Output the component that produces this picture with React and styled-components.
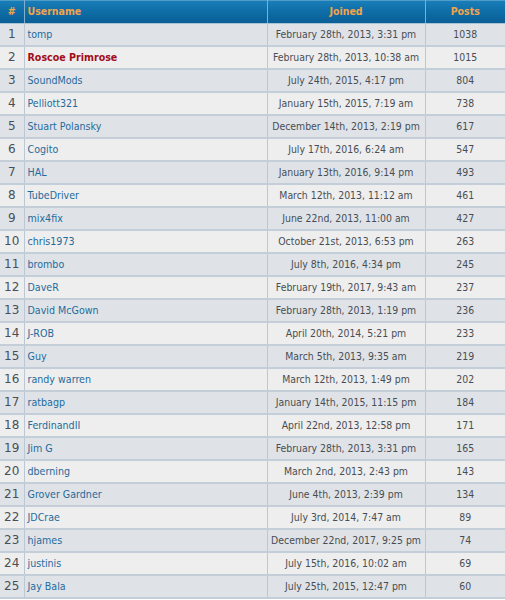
import React from "react";
import styled, { createGlobalStyle } from "styled-components";

const Global = createGlobalStyle`
  html, body { margin: 0; padding: 0; background: #ffffff; }
  body { font-family: "DejaVu Sans Condensed", "DejaVu Sans", Verdana, sans-serif; }
`;

const Table = styled.table`
  width: 505px;
  border-collapse: collapse;
  table-layout: fixed;
  font-family: "DejaVu Sans Condensed", "DejaVu Sans", Verdana, sans-serif;
  font-size: 10.4px;
`;

const HeadRow = styled.tr`
  background: linear-gradient(to bottom, #1a80b9 0%, #0f6ea8 45%, #0a5e95 100%);
  box-shadow: inset 0 1px 0 #4d9cca;
`;

const Th = styled.th`
  height: 23px;
  line-height: 23px;
  padding: 0 3px;
  color: #f3a34a;
  font-weight: bold;
  font-size: 10.5px;
  text-align: ${(p) => p.$align || "center"};
  border-right: 1px solid #7fb0cf;
  border-bottom: 1px solid #a9c3d5;
  &:last-child { border-right: none; }
`;

const Row = styled.tr`
  background: ${(p) => (p.$odd ? "#dfe3e8" : "#eeeeee")};
`;

const Td = styled.td`
  height: 21px;
  line-height: 21px;
  padding: 0 2px;
  color: #484d53;
  text-align: ${(p) => p.$align || "center"};
  border-right: 1px solid #b9c8d4;
  border-bottom: 2px solid #c3ced8;
  white-space: nowrap;
  overflow: hidden;
  &:last-child { border-right: none; }
`;

const NumCell = styled(Td)`
  padding: 0;
  font-family: "DejaVu Sans", Verdana, sans-serif;
  font-size: 12px;
  color: #4a4f55;
`;

const NameCell = styled(Td)`
  padding-left: 3px;
`;

const UserLink = styled.a`
  color: ${(p) => (p.$admin ? "#a30d17" : "#1f6b9c")};
  font-weight: ${(p) => (p.$admin ? "bold" : "normal")};
  font-size: 10.6px;
  text-decoration: none;
`;

const rows = [
  ["tomp", "February 28th, 2013, 3:31 pm", 1038],
  ["Roscoe Primrose", "February 28th, 2013, 10:38 am", 1015, true],
  ["SoundMods", "July 24th, 2015, 4:17 pm", 804],
  ["Pelliott321", "January 15th, 2015, 7:19 am", 738],
  ["Stuart Polansky", "December 14th, 2013, 2:19 pm", 617],
  ["Cogito", "July 17th, 2016, 6:24 am", 547],
  ["HAL", "January 13th, 2016, 9:14 pm", 493],
  ["TubeDriver", "March 12th, 2013, 11:12 am", 461],
  ["mix4fix", "June 22nd, 2013, 11:00 am", 427],
  ["chris1973", "October 21st, 2013, 6:53 pm", 263],
  ["brombo", "July 8th, 2016, 4:34 pm", 245],
  ["DaveR", "February 19th, 2017, 9:43 am", 237],
  ["David McGown", "February 28th, 2013, 1:19 pm", 236],
  ["J-ROB", "April 20th, 2014, 5:21 pm", 233],
  ["Guy", "March 5th, 2013, 9:35 am", 219],
  ["randy warren", "March 12th, 2013, 1:49 pm", 202],
  ["ratbagp", "January 14th, 2015, 11:15 pm", 184],
  ["FerdinandII", "April 22nd, 2013, 12:58 pm", 171],
  ["Jim G", "February 28th, 2013, 3:31 pm", 165],
  ["dberning", "March 2nd, 2013, 2:43 pm", 143],
  ["Grover Gardner", "June 4th, 2013, 2:39 pm", 134],
  ["JDCrae", "July 3rd, 2014, 7:47 am", 89],
  ["hjames", "December 22nd, 2017, 9:25 pm", 74],
  ["justinis", "July 15th, 2016, 10:02 am", 69],
  ["Jay Bala", "July 25th, 2015, 12:47 pm", 60],
];

export default function App() {
  return (
    <>
      <Global />
      <Table>
        <colgroup>
          <col style={{ width: 24 }} />
          <col style={{ width: 243 }} />
          <col style={{ width: 158 }} />
          <col style={{ width: 80 }} />
        </colgroup>
        <thead>
          <HeadRow>
            <Th>#</Th>
            <Th $align="left">Username</Th>
            <Th>Joined</Th>
            <Th>Posts</Th>
          </HeadRow>
        </thead>
        <tbody>
          {rows.map(([name, joined, posts, admin], i) => (
            <Row key={name} $odd={i % 2 === 0}>
              <NumCell>{i + 1}</NumCell>
              <NameCell $align="left">
                <UserLink href="#" $admin={admin}>{name}</UserLink>
              </NameCell>
              <Td>{joined}</Td>
              <Td>{posts}</Td>
            </Row>
          ))}
        </tbody>
      </Table>
    </>
  );
}
